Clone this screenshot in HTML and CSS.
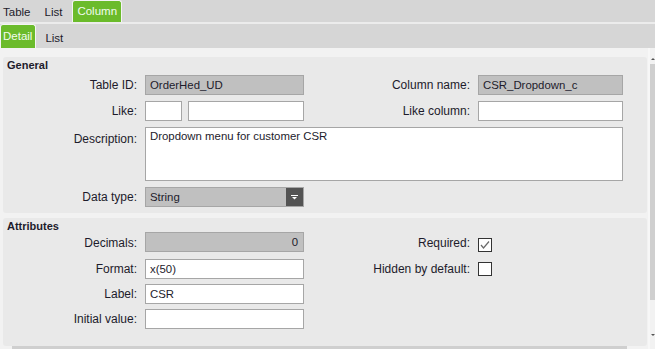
FILE: index.html
```html
<!DOCTYPE html>
<html>
<head>
<meta charset="utf-8">
<link rel="stylesheet" href="styles.css">
</head>
<body>
<div class="tabbar top">
  <span class="tab t-table">Table</span>
  <span class="tab t-list">List</span>
  <span class="tab active t-column">Column</span>
</div>
<div class="sep"></div>
<div class="tabbar sub">
  <span class="tab active t-detail">Detail</span>
  <span class="tab t-list2">List</span>
</div>
<div class="main">
  <div class="content">
    <section class="panel general">
      <div class="ptitle">General</div>
      <div class="grid ggrid">
        <label class="lbl">Table ID:</label>
        <div class="box ro">OrderHed_UD</div>
        <label class="lbl">Column name:</label>
        <div class="box ro">CSR_Dropdown_c</div>

        <label class="lbl">Like:</label>
        <div class="likepair"><div class="box small"></div><div class="box grow"></div></div>
        <label class="lbl">Like column:</label>
        <div class="box"></div>

        <label class="lbl top">Description:</label>
        <div class="box area">Dropdown menu for customer CSR</div>

        <label class="lbl">Data type:</label>
        <div class="box ro select">String<span class="dd"><svg width="7" height="5" viewBox="0 0 7 5"><rect x="0" y="0" width="7" height="1" fill="#fff"/><polygon points="1,2 6,2 3.5,4.5" fill="#fff"/></svg></span></div>
      </div>
    </section>
    <section class="panel attrs">
      <div class="ptitle">Attributes</div>
      <div class="grid agrid">
        <label class="lbl">Decimals:</label>
        <div class="box ro num">0</div>
        <label class="lbl">Required:</label>
        <div class="chk req"><svg width="14" height="14" viewBox="0 0 14 14"><polyline points="3,7 5.5,10 11,3.5" fill="none" stroke="#6a6a6a" stroke-width="1.2"/></svg></div>

        <label class="lbl">Format:</label>
        <div class="box">x(50)</div>
        <label class="lbl">Hidden by default:</label>
        <div class="chk"></div>

        <label class="lbl">Label:</label>
        <div class="box">CSR</div>
        <span></span><span></span>

        <label class="lbl">Initial value:</label>
        <div class="box"></div>
      </div>
    </section>
    <div class="hscroll"></div>
  </div>
  <div class="vscroll">
    <span class="arrow up"></span>
    <span class="thumb"></span>
    <span class="arrow down"></span>
  </div>
</div>
</body>
</html>
```

FILE: styles.css
```css
* { box-sizing: border-box; }
html, body {
  margin: 0;
  padding: 0;
}
body {
  width: 655px;
  height: 349px;
  overflow: hidden;
  background: #f2f2f2;
  font-family: "Liberation Sans", Arial, sans-serif;
  font-size: 12px;
  color: #1d1b2b;
}
.tabbar {
  display: flex;
  background: #d6d6d6;
}
.tabbar.top { height: 22px; }
.tabbar.sub { height: 24px; }
.sep { height: 2px; background: #ececec; }
.tab {
  font-size: 11.5px;
  display: flex;
  align-items: center;
  color: #1d1b2b;
  padding-top: 2px;
}
.tabbar.sub .tab { padding-top: 4px; }
.tab.active {
  background: #6bbb2b;
  color: #f2fbef;
  border: 1px solid #f4f4f4;
  border-bottom: none;
  border-radius: 3px 3px 0 0;
  padding-top: 0;
  padding-bottom: 2px;
}
.tabbar.sub .tab.active { padding-top: 0; padding-bottom: 1px; }
.t-table { margin-left: 3px; }
.t-list { margin-left: 14px; }
.t-column { margin-left: 10px; padding-left: 4px; padding-right: 4px; }
.t-detail { padding-left: 2px; padding-right: 3px; border-left: none; }
.t-list2 { margin-left: 9px; }

.main {
  display: flex;
  height: 301px;
}
.content {
  width: 648px;
  padding: 9px 0 0 3px;
  display: flex;
  flex-direction: column;
}
.panel {
  background: #e9e9e9;
  border-radius: 3px;
  width: 644px;
}
.panel.general { height: 156px; margin-bottom: 5px; }
.panel.attrs { height: 128px; }
.ptitle {
  font-weight: bold;
  font-size: 11px;
  line-height: 12px;
  padding: 2px 0 0 4px;
}
.general .ggrid { margin-top: 4px; }
.grid {
  display: grid;
  grid-template-columns: 142px 159px 174px 145px;
}
.ggrid {
  grid-template-rows: 20px 20px 54px 20px;
  row-gap: 6px;
}
.agrid {
  grid-template-rows: 22px 20px 20px 20px;
  row-gap: 5px;
}
.lbl {
  text-align: right;
  padding-right: 8px;
  align-self: center;
  white-space: nowrap;
}
.lbl.top { align-self: start; padding-top: 5px; }
.box {
  height: 20px;
  border: 1px solid #a6a6a6;
  background: #fff;
  font-size: 11.4px;
  line-height: 18px;
  padding: 0 4px;
  white-space: nowrap;
  overflow: hidden;
}
.box.ro { background: #c0c0c0; }
.agrid .box.num { align-self: start; text-align: right; }
.box.area {
  grid-column: 2 / 5;
  width: 478px;
  height: 54px;
  line-height: 14px;
  padding-top: 1px;
}
.likepair { display: flex; gap: 6px; }
.box.small { width: 37px; }
.box.grow { flex: 1; }
.box.select {
  display: flex;
  justify-content: space-between;
  padding-right: 0;
}
.dd {
  width: 17px;
  height: 18px;
  background: #535353;
  display: flex;
  align-items: center;
  justify-content: center;
}
.num { padding-right: 5px; }
.chk {
  width: 14px;
  height: 14px;
  border: 1px solid #333;
  background: #fff;
  align-self: center;
  position: relative;
}
.chk.req { margin-top: 4px; }
.chk svg { position: absolute; left: -1px; top: -1px; }
.hscroll {
  margin-left: 9px;
  width: 615px;
  height: 3px;
  background: #cfcfcf;
}
.vscroll {
  width: 7px;
  display: flex;
  flex-direction: column;
  align-items: flex-end;
  border-left: 2px solid #f7f7f7;
}
.thumb {
  width: 5px;
  height: 236px;
  background: #cfcfcf;
  margin-top: 4px;
}
.arrow {
  width: 0;
  height: 0;
  border-left: 2px solid transparent;
  border-right: 2px solid transparent;
}
.arrow.up {
  margin-top: 10px;
  border-bottom: 2px solid #555;
}
.arrow.down {
  margin-top: 34px;
  border-top: 2px solid #555;
}
```
